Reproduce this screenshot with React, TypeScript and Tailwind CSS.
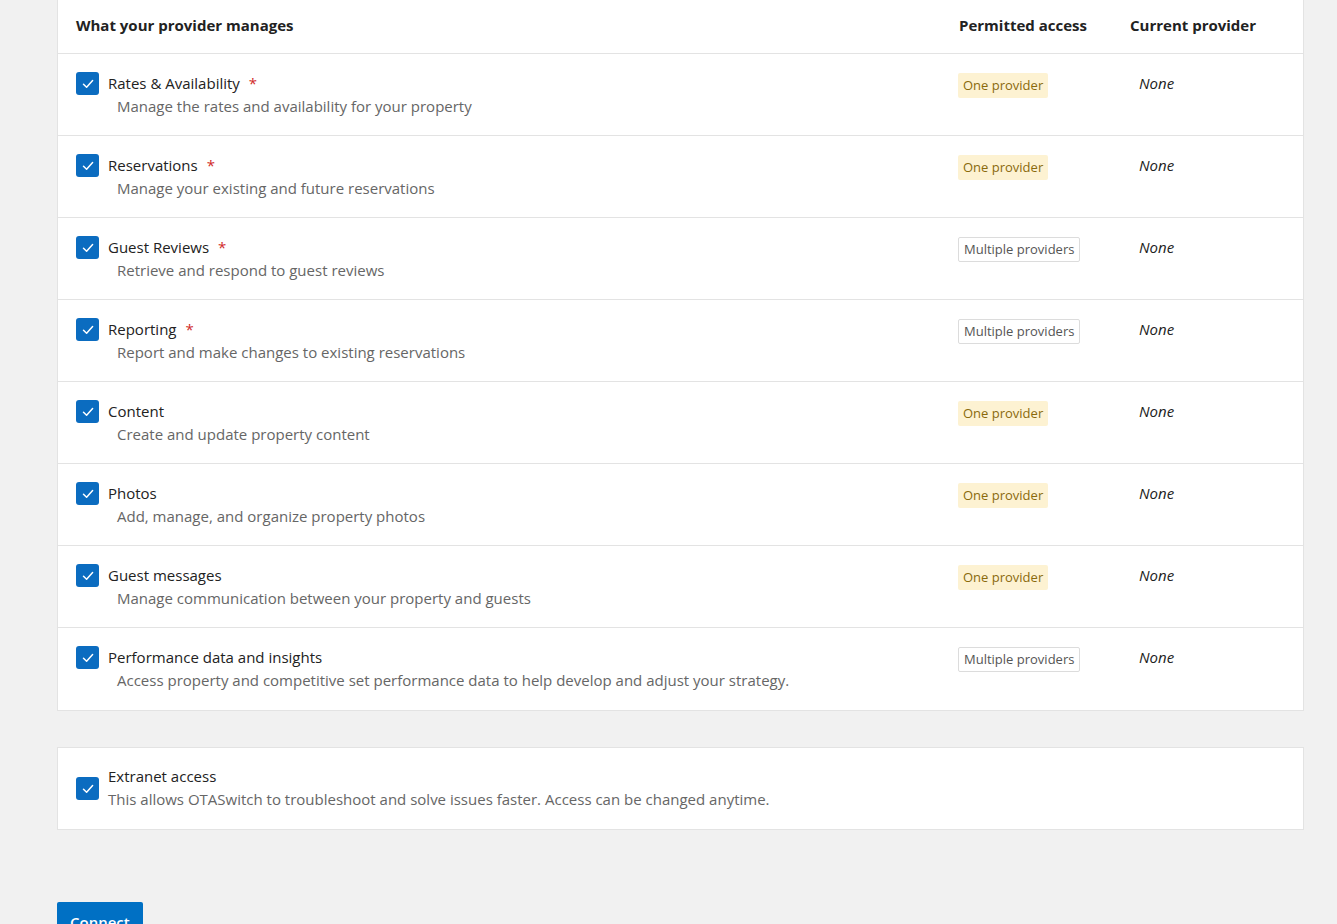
const rows = [
  { title: "Rates & Availability", desc: "Manage the rates and availability for your property", req: true, multi: false },
  { title: "Reservations", desc: "Manage your existing and future reservations", req: true, multi: false },
  { title: "Guest Reviews", desc: "Retrieve and respond to guest reviews", req: true, multi: true },
  { title: "Reporting", desc: "Report and make changes to existing reservations", req: true, multi: true },
  { title: "Content", desc: "Create and update property content", req: false, multi: false },
  { title: "Photos", desc: "Add, manage, and organize property photos", req: false, multi: false },
  { title: "Guest messages", desc: "Manage communication between your property and guests", req: false, multi: false },
  {
    title: "Performance data and insights",
    desc: "Access property and competitive set performance data to help develop and adjust your strategy.",
    req: false,
    multi: true,
  },
];

function Check() {
  return (
    <div className="w-[23px] h-[23px] rounded-[3px] bg-[#0b6cc0] flex items-center justify-center shrink-0">
      <svg width="14" height="14" viewBox="0 0 14 14" fill="none">
        <path d="M2.5 7.3 L5.6 10.3 L11.6 3.6" stroke="white" strokeWidth="1.5" strokeLinecap="round" strokeLinejoin="round" />
      </svg>
    </div>
  );
}

export default function App() {
  return (
    <div className="min-h-[924px] bg-[#f1f1f1] text-[15px] text-[#222]" style={{ fontFamily: '"Open Sans", "Noto Sans", sans-serif' }}>
      <div className="pl-[57px] pr-[33px]">
        {/* main table */}
        <div className="bg-white border-x border-b border-[#e3e3e3]">
          <div className="h-[54px] flex items-center pb-[2px] border-b border-[#e3e3e3] px-[18px] font-bold text-[15px]">
            <div className="flex-1">What your provider manages</div>
            <div className="w-[172px] pl-px">Permitted access</div>
            <div className="w-[155px]">Current provider</div>
          </div>
          {rows.map((r, i) => (
            <div
              key={r.title}
              className={"h-[82px] flex px-[18px] pt-[18px] " + (i < rows.length - 1 ? "border-b border-[#e3e3e3]" : "")}
            >
              <div className="flex-1 flex gap-[9px]">
                <Check />
                <div className="leading-[23px]">
                  <div className="text-[#222]">
                    {r.title}
                    {r.req && <span className="text-[#d12a2a] ml-[9px]">*</span>}
                  </div>
                  <div className="text-[#666] ml-[9px]">{r.desc}</div>
                </div>
              </div>
              <div className="w-[172px] pt-px">
                {r.multi ? (
                  <span className="inline-block px-[5px] h-[25px] leading-[23px] border border-[#dcdcdc] rounded-[2px] text-[13px] text-[#555]">
                    Multiple providers
                  </span>
                ) : (
                  <span className="inline-block px-[5px] h-[25px] leading-[25px] bg-[#fdf2d2] rounded-[2px] text-[13px] text-[#8a6a0c]">
                    One provider
                  </span>
                )}
              </div>
              <div className="w-[155px] pl-[9px] italic leading-[23px] text-[#222]">None</div>
            </div>
          ))}
        </div>

        {/* extranet */}
        <div className="mt-[36px] bg-white border border-[#e3e3e3] h-[83px] flex items-center gap-[9px] px-[18px]">
          <Check />
          <div className="leading-[23px] -mt-[1px]">
            <div className="text-[#222]">Extranet access</div>
            <div className="text-[#666]">This allows OTASwitch to troubleshoot and solve issues faster. Access can be changed anytime.</div>
          </div>
        </div>

        <div className="pt-[72px]">
          <button className="bg-[#0070c4] text-white font-semibold px-[13px] h-[40px] rounded-[2px] text-[15px] leading-[40px]">
            Connect
          </button>
        </div>
      </div>
    </div>
  );
}
